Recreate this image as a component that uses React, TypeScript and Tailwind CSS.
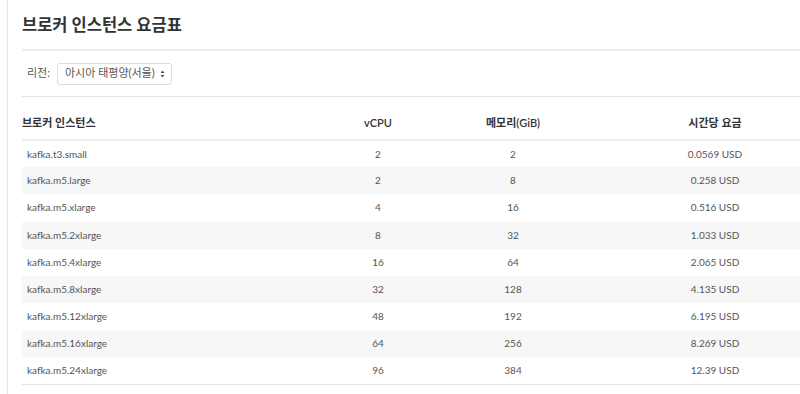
import React from 'react';

const ROWS: [string, number, number, string][] = [
  ['kafka.t3.small', 2, 2, '0.0569 USD'],
  ['kafka.m5.large', 2, 8, '0.258 USD'],
  ['kafka.m5.xlarge', 4, 16, '0.516 USD'],
  ['kafka.m5.2xlarge', 8, 32, '1.033 USD'],
  ['kafka.m5.4xlarge', 16, 64, '2.065 USD'],
  ['kafka.m5.8xlarge', 32, 128, '4.135 USD'],
  ['kafka.m5.12xlarge', 48, 192, '6.195 USD'],
  ['kafka.m5.16xlarge', 64, 256, '8.269 USD'],
  ['kafka.m5.24xlarge', 96, 384, '12.39 USD'],
];

const font = { fontFamily: 'Lato, "Noto Sans CJK KR", sans-serif' };

const App: React.FC = () => {
  return (
    <div className="w-[800px] h-[394px] overflow-hidden bg-white" style={font}>
      <div className="ml-[7px] h-full border-l border-[#e6e6e6] pl-[14px]">
        <h1 className="pt-[14px] pb-[13px] text-[16.5px] font-bold leading-[22px] text-[#333]">
          브로커 인스턴스 요금표
        </h1>
        <div className="border-t-2 border-[#eee]" />
        <div className="flex items-center h-[45px] pl-[5px] text-[11px] text-[#555]">
          <span className="mr-[7px]">리전:</span>
          <div className="flex items-center justify-between w-[115px] h-[22px] rounded-[3px] border border-[#ddd] pl-[7px] pr-[6px]">
            <span>아시아 태평양(서울)</span>
            <svg width="5" height="8" viewBox="0 0 5 8" className="fill-[#555]">
              <path d="M2.5 0.5 L4.5 3 H0.5 Z M2.5 7.5 L4.5 5 H0.5 Z" />
            </svg>
          </div>
        </div>
        <div className="border-t border-[#e3e6e6]" />
        <table className="mt-[18px] w-[778px] table-fixed border-collapse">
          <colgroup>
            <col className="w-[338px]" />
            <col className="w-[36px]" />
            <col className="w-[234px]" />
            <col className="w-[170px]" />
          </colgroup>
          <thead>
            <tr className="h-[25px] border-b-2 border-[#eee] text-[11px] text-[#333]">
              <th className="text-left font-semibold pb-[6px] align-top">브로커 인스턴스</th>
              <th className="text-center font-semibold pb-[6px] align-top whitespace-nowrap">vCPU</th>
              <th className="text-center font-semibold pb-[6px] align-top">메모리(GiB)</th>
              <th className="text-center font-semibold pb-[6px] align-top">시간당 요금</th>
            </tr>
          </thead>
          <tbody className="text-[10px] text-[#555]">
            {ROWS.map(([name, cpu, mem, price], i) => (
              <tr
                key={name}
                className={`h-[27.2px] ${i % 2 === 1 ? 'bg-[#f7f7f7]' : 'bg-white'} ${i === ROWS.length - 1 ? 'border-b border-[#e3e6e6]' : ''}`}
              >
                <td className="pl-[5px]">{name}</td>
                <td className="text-center">{cpu}</td>
                <td className="text-center">{mem}</td>
                <td className="text-center">{price}</td>
              </tr>
            ))}
          </tbody>
        </table>
      </div>
    </div>
  );
};

export default App;
